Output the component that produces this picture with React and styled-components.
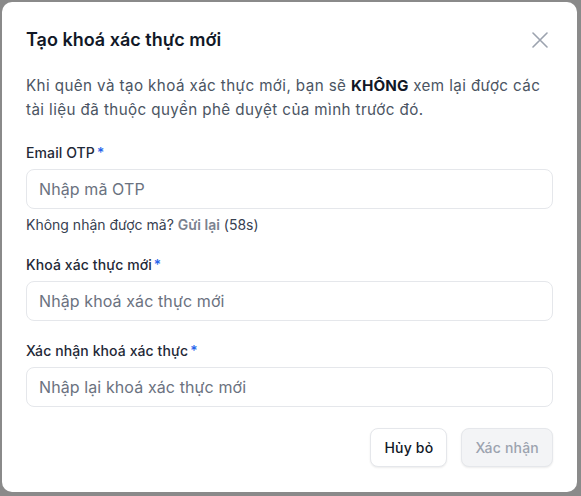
import React from "react";
import styled, { createGlobalStyle } from "styled-components";

const Global = createGlobalStyle`
  html, body { margin: 0; padding: 0; }
  body {
    background: #8a8a8a;
    font-family: Inter, "Noto Sans", sans-serif;
    -webkit-font-smoothing: antialiased;
  }
  * { box-sizing: border-box; }
`;

const Overlay = styled.div`
  width: 581px;
  height: 496px;
  padding: 2px 4px 4px 2px;
  display: flex;
`;

const Modal = styled.div`
  flex: 1;
  background: #ffffff;
  border-radius: 10px;
  padding: 24px;
  display: flex;
  flex-direction: column;
`;

const Header = styled.div`
  display: flex;
  align-items: center;
  justify-content: space-between;
  height: 28px;
`;

const Title = styled.h2`
  margin: 0;
  font-size: 18px;
  font-weight: 600;
  color: #111827;
  line-height: 28px;
`;

const CloseButton = styled.button`
  border: 0;
  background: transparent;
  padding: 0;
  margin-right: 4px;
  width: 18px;
  height: 18px;
  display: flex;
  align-items: center;
  justify-content: center;
  color: #9ca3af;
  cursor: pointer;
`;

const Description = styled.p`
  margin: 20px 0 0;
  max-width: 524px;
  font-size: 15.2px;
  line-height: 24px;
  letter-spacing: 0.4px;
  color: #4b5563;
  strong { color: #111827; font-weight: 700; letter-spacing: 0.1px; }
`;

const Field = styled.div`
  display: flex;
  flex-direction: column;
  margin-top: ${(p) => p.$gap}px;
`;

const Label = styled.label`
  font-size: 14px;
  line-height: 20px;
  font-weight: 500;
  letter-spacing: 0.1px;
  color: #1f2937;
  margin-bottom: 6px;
  span { color: #2563eb; margin-left: 2px; }
`;

const Input = styled.input`
  height: 40px;
  border: 1px solid #e5e7eb;
  border-radius: 8px;
  padding: 0 12px;
  font-family: inherit;
  font-size: 16px;
  letter-spacing: 0.1px;
  color: #111827;
  outline: none;
  &::placeholder { color: #6b7280; }
`;

const Helper = styled.div`
  margin-top: 6px;
  font-size: 14px;
  line-height: 20px;
  color: #374151;
  b { color: #7b8290; font-weight: 600; }
`;

const Footer = styled.div`
  display: flex;
  justify-content: flex-end;
  gap: 14px;
  margin-top: 21px;
`;

const Button = styled.button`
  height: 39px;
  padding: 0 13px;
  border-radius: 8px;
  font-family: inherit;
  font-size: 14px;
  letter-spacing: 0.2px;
  font-weight: 500;
  border: 1px solid #e5e7eb;
  box-shadow: 0 1px 2px rgba(0, 0, 0, 0.08);
  background: ${(p) => (p.$disabled ? "#f3f4f6" : "#ffffff")};
  color: ${(p) => (p.$disabled ? "#9ca3af" : "#111827")};
  cursor: ${(p) => (p.$disabled ? "not-allowed" : "pointer")};
`;

export default function App() {
  return (
    <>
      <Global />
      <Overlay>
        <Modal>
          <Header>
            <Title>Tạo khoá xác thực mới</Title>
            <CloseButton aria-label="Đóng">
              <svg width="16" height="16" viewBox="0 0 16 16" fill="none">
                <path d="M1 1L15 15M15 1L1 15" stroke="currentColor" strokeWidth="1.6" strokeLinecap="round" />
              </svg>
            </CloseButton>
          </Header>
          <Description>
            Khi quên và tạo khoá xác thực mới, bạn sẽ <strong>KHÔNG</strong> xem lại được các tài liệu đã thuộc quyền phê duyệt của mình trước đó.
          </Description>
          <Field $gap={21}>
            <Label>Email OTP<span>*</span></Label>
            <Input placeholder="Nhập mã OTP" />
            <Helper>
              Không nhận được mã? <b>Gửi lại</b> (58s)
            </Helper>
          </Field>
          <Field $gap={20}>
            <Label>Khoá xác thực mới<span>*</span></Label>
            <Input placeholder="Nhập khoá xác thực mới" />
          </Field>
          <Field $gap={20}>
            <Label>Xác nhận khoá xác thực<span>*</span></Label>
            <Input placeholder="Nhập lại khoá xác thực mới" />
          </Field>
          <Footer>
            <Button>Hủy bỏ</Button>
            <Button $disabled>Xác nhận</Button>
          </Footer>
        </Modal>
      </Overlay>
    </>
  );
}
